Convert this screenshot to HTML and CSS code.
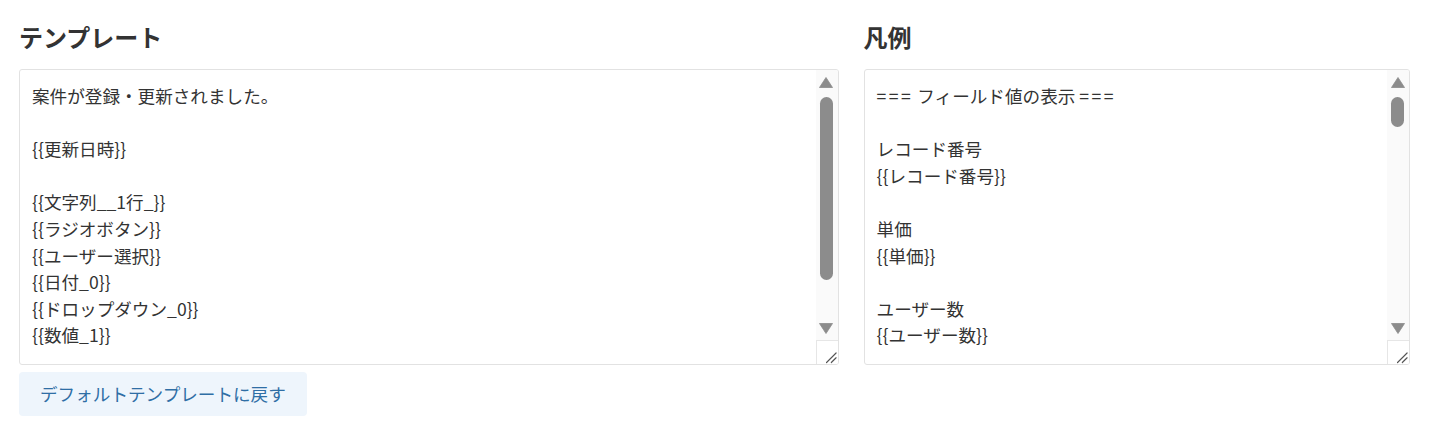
FILE: index.html
```html
<!DOCTYPE html>
<html lang="ja">
<head>
<meta charset="utf-8">
<title>テンプレート</title>
<link rel="stylesheet" href="styles.css">
</head>
<body>
<div class="page">
  <div class="grid">
    <section class="col">
      <h2 class="title">テンプレート</h2>
      <div class="box">
        <div class="content">
          <div class="line">案件が登録・更新されました。</div>
          <div class="line"></div>
          <div class="line">{{更新日時}}</div>
          <div class="line"></div>
          <div class="line">{{文字列__1行_}}</div>
          <div class="line">{{ラジオボタン}}</div>
          <div class="line">{{ユーザー選択}}</div>
          <div class="line">{{日付_0}}</div>
          <div class="line">{{ドロップダウン_0}}</div>
          <div class="line">{{数値_1}}</div>
        </div>
        <div class="sbar">
          <div class="arrow"><svg width="14" height="11" viewBox="0 0 14 11"><path d="M7 0.5 L13.5 10.5 L0.5 10.5 Z" fill="#8c8c8c" stroke="#8c8c8c" stroke-width="0.8" stroke-linejoin="round"/></svg></div>
          <div class="track"><div class="thumb thumb-long"></div></div>
          <div class="arrow"><svg width="14" height="11" viewBox="0 0 14 11"><path d="M0.5 0.5 L13.5 0.5 L7 10.5 Z" fill="#8c8c8c" stroke="#8c8c8c" stroke-width="0.8" stroke-linejoin="round"/></svg></div>
          <div class="corner"><svg width="22" height="23" viewBox="0 0 22 23"><path d="M10 22 L20 12 M15 22 L20 17" stroke="#555" stroke-width="1.2" stroke-linecap="round"/></svg></div>
        </div>
      </div>
      <div class="actions">
        <button class="reset" type="button">デフォルトテンプレートに戻す</button>
      </div>
    </section>
    <section class="col">
      <h2 class="title">凡例</h2>
      <div class="box">
        <div class="content">
          <div class="line"><span class="eq">===</span> フィールド値の表示 <span class="eq">===</span></div>
          <div class="line"></div>
          <div class="line">レコード番号</div>
          <div class="line">{{レコード番号}}</div>
          <div class="line"></div>
          <div class="line">単価</div>
          <div class="line">{{単価}}</div>
          <div class="line"></div>
          <div class="line">ユーザー数</div>
          <div class="line">{{ユーザー数}}</div>
        </div>
        <div class="sbar">
          <div class="arrow"><svg width="14" height="11" viewBox="0 0 14 11"><path d="M7 0.5 L13.5 10.5 L0.5 10.5 Z" fill="#8c8c8c" stroke="#8c8c8c" stroke-width="0.8" stroke-linejoin="round"/></svg></div>
          <div class="track"><div class="thumb thumb-short"></div></div>
          <div class="arrow"><svg width="14" height="11" viewBox="0 0 14 11"><path d="M0.5 0.5 L13.5 0.5 L7 10.5 Z" fill="#8c8c8c" stroke="#8c8c8c" stroke-width="0.8" stroke-linejoin="round"/></svg></div>
          <div class="corner"><svg width="22" height="23" viewBox="0 0 22 23"><path d="M10 22 L20 12 M15 22 L20 17" stroke="#555" stroke-width="1.2" stroke-linecap="round"/></svg></div>
        </div>
      </div>
    </section>
  </div>
</div>
</body>
</html>
```

FILE: styles.css
```css
* { box-sizing: border-box; }
html, body {
  margin: 0;
  padding: 0;
  background: #ffffff;
}
body {
  font-family: "Noto Sans CJK JP", "Noto Sans", sans-serif;
  color: #333333;
}
.page {
  padding: 22px 21px 0 19px;
}
.grid {
  display: grid;
  grid-template-columns: 3fr 2fr;
  column-gap: 25px;
}
.col {
  display: flex;
  flex-direction: column;
  min-width: 0;
}
.title {
  margin: 0 0 18px 0;
  font-size: 24px;
  line-height: 29px;
  font-weight: 700;
  color: #333333;
}
.box {
  display: flex;
  height: 296px;
  border: 1px solid #e2e2e2;
  border-radius: 3px;
  overflow: hidden;
  background: #ffffff;
}
.content {
  flex: 1;
  min-width: 0;
  padding: 13px 12px 0 12px;
  font-size: 17.6px;
  line-height: 26.6px;
  color: #333333;
  overflow: hidden;
}
.line {
  height: 26.6px;
  white-space: pre;
}
.eq {
  letter-spacing: 2.5px;
}
.sbar {
  width: 22px;
  flex: none;
  display: flex;
  flex-direction: column;
  background: #fafafa;
}
.arrow {
  height: 24px;
  display: flex;
  align-items: center;
  justify-content: center;
  padding-right: 1px;
}
.track {
  height: 222px;
  display: flex;
  justify-content: center;
  padding-top: 3px;
  padding-right: 1px;
}
.thumb {
  width: 13px;
  background: #8c8c8c;
  border-radius: 7px;
}
.thumb-long { height: 183px; }
.thumb-short { height: 30px; }
.corner {
  height: 24px;
  background: #ffffff;
  border-left: 1px solid #e6e6e6;
  border-top: 1px solid #e6e6e6;
  display: flex;
}
.actions {
  display: flex;
  margin-top: 7px;
}
.reset {
  font-family: "Noto Sans CJK JP", "Noto Sans", sans-serif;
  font-size: 17.6px;
  line-height: 26px;
  padding: 9px 21px 9px 21px;
  color: #2f6ea5;
  background: #eef5fc;
  border: none;
  border-radius: 4px;
  cursor: pointer;
}
```
